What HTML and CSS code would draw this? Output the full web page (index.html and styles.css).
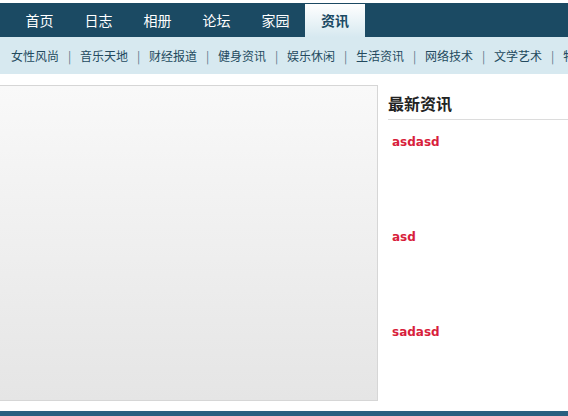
FILE: index.html
```html
<!DOCTYPE html>
<html lang="zh-CN">
<head>
    <meta charset="UTF-8">
    <title>资讯</title>
    <link rel="stylesheet" href="styles.css">
</head>
<body>
    <div class="nav">
        <a class="tab">首页</a>
        <a class="tab">日志</a>
        <a class="tab">相册</a>
        <a class="tab">论坛</a>
        <a class="tab">家园</a>
        <a class="tab active">资讯</a>
    </div>
    <div class="subnav">
        <a>女性风尚</a><span class="sep">|</span>
        <a>音乐天地</a><span class="sep">|</span>
        <a>财经报道</a><span class="sep">|</span>
        <a>健身资讯</a><span class="sep">|</span>
        <a>娱乐休闲</a><span class="sep">|</span>
        <a>生活资讯</a><span class="sep">|</span>
        <a>网络技术</a><span class="sep">|</span>
        <a>文学艺术</a><span class="sep">|</span>
        <a>物理知识</a>
    </div>
    <div class="main">
        <div class="slide"></div>
        <div class="side">
            <h3>最新资讯</h3>
            <ul class="news">
                <li><a>asdasd</a></li>
                <li><a>asd</a></li>
                <li><a>sadasd</a></li>
            </ul>
        </div>
    </div>
    <div class="footer"></div>
</body>
</html>
```

FILE: styles.css
```css
/* page */
body {
    margin: 0;
    padding-top: 3px;
    font-family: "Noto Sans CJK SC", "DejaVu Sans", sans-serif;
    background: #fff;
    width: 568px;
    overflow: hidden;
}
a {
    text-decoration: none;
    cursor: pointer;
}

/* top nav */
.nav {
    display: flex;
    height: 34px;
    padding-left: 10px;
    background-color: #1b4a63;
}
.tab {
    width: 59px;
    text-align: center;
    color: #fff;
    font-size: 14px;
    line-height: 34px;
}
.tab.active {
    width: 60px;
    margin-top: 1px;
    line-height: 33px;
    color: #1b4a63;
    font-weight: bold;
    background: linear-gradient(#ffffff, #d7e9f0);
}

/* sub nav */
.subnav {
    display: flex;
    height: 37px;
    line-height: 37px;
    padding-left: 11px;
    background-color: #d7e9f0;
    font-size: 12px;
    white-space: nowrap;
    overflow: hidden;
    color: #234a5e;
}
.subnav a {
    flex: none;
    color: #234a5e;
}
.subnav .sep {
    flex: none;
    width: 21px;
    text-align: center;
    color: #5a7a8c;
}

/* content */
.main {
    display: flex;
    margin-top: 11px;
    height: 316px;
}
.slide {
    width: 377px;
    border: 1px solid #d6d6d6;
    border-left: none;
    background: linear-gradient(#f9f9f9, #e5e5e5);
}
.side {
    flex: 1;
    margin-left: 10px;
    padding-top: 1px;
}
.side h3 {
    margin: 0;
    height: 33px;
    line-height: 34px;
    font-size: 16px;
    color: #222;
    border-bottom: 1px solid #dcdcdc;
}
.news {
    list-style: none;
    margin: 0;
    padding: 15px 0 0 4px;
}
.news li {
    height: 95px;
    font-family: "DejaVu Sans", sans-serif;
    font-size: 12px;
    font-weight: bold;
}
.news a {
    color: #d81e3c;
}

/* footer */
.footer {
    margin-top: 10px;
    height: 6px;
    background-color: #2a6080;
}
```
